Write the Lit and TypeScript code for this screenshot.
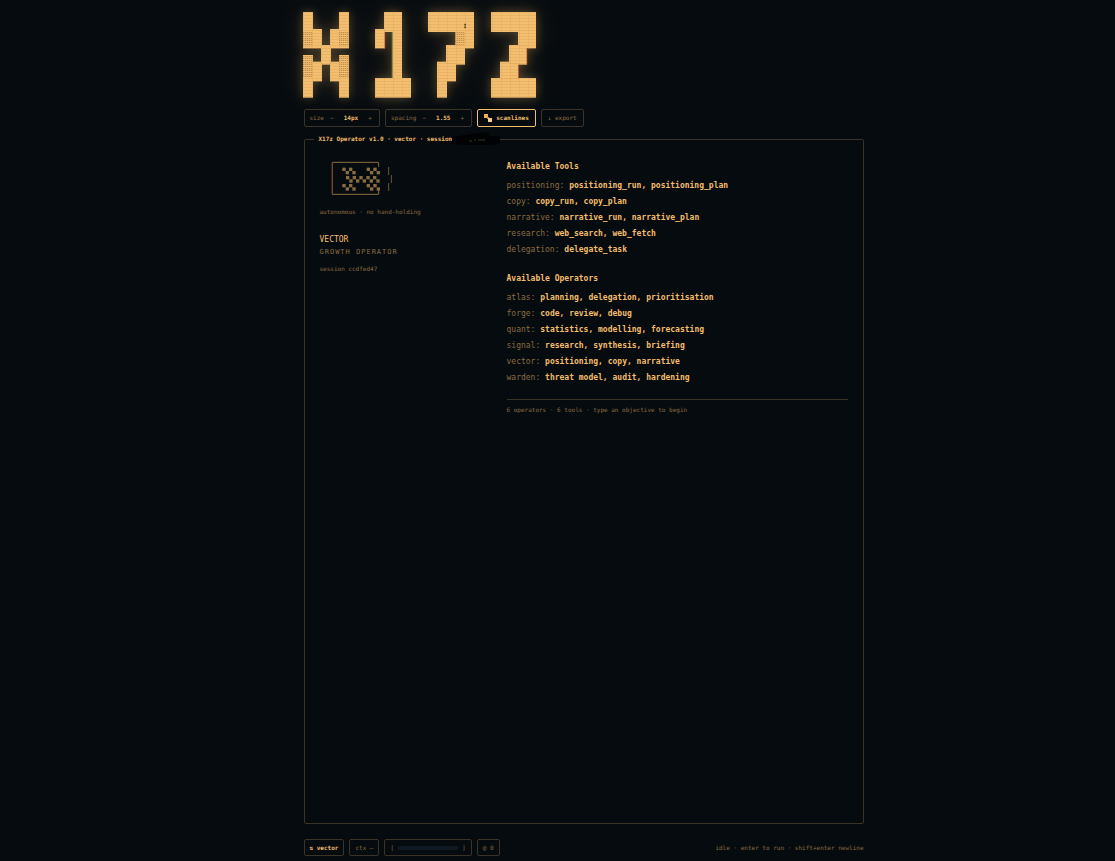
import { LitElement, html, css, svg } from "lit";
import { customElement, state } from "lit/decorators.js";

type Row = [string, string];
type Rect = [number, number, number, number];

const TOOLS: Row[] = [
  ["positioning", "positioning_run, positioning_plan"],
  ["copy", "copy_run, copy_plan"],
  ["narrative", "narrative_run, narrative_plan"],
  ["research", "web_search, web_fetch"],
  ["delegation", "delegate_task"],
];

const OPERATORS: Row[] = [
  ["atlas", "planning, delegation, prioritisation"],
  ["forge", "code, review, debug"],
  ["quant", "statistics, modelling, forecasting"],
  ["signal", "research, synthesis, briefing"],
  ["vector", "positioning, copy, narrative"],
  ["warden", "threat model, audit, hardening"],
];

// Block artwork, x1 y1 x2 y2 on a 702 x 258 canvas
const BLOCKS: Rect[] = [
  [0, 0, 30, 109], [108, 0, 138, 109], [30, 51, 57, 109], [81, 51, 108, 109], [54, 99, 84, 158],
  [0, 129, 30, 257], [108, 129, 138, 257], [30, 149, 57, 208], [81, 149, 108, 208],
  [243, 0, 297, 60], [216, 51, 246, 109], [268, 59, 297, 199], [216, 198, 324, 257],
  [375, 0, 513, 60], [457, 59, 513, 109], [429, 99, 486, 158], [402, 149, 459, 208], [402, 198, 432, 257],
  [564, 0, 699, 60], [645, 59, 699, 109], [618, 99, 672, 158], [591, 149, 647, 208], [564, 198, 699, 257],
];
const SHADES: Rect[] = [
  [0, 60, 30, 103], [108, 60, 138, 103], [0, 132, 30, 196], [108, 132, 138, 196], [459, 60, 486, 98],
];

@customElement("x-wordmark")
export class Wordmark extends LitElement {
  static styles = css`
    :host { display: block; }
    svg { display: block; width: 234px; height: 86px; overflow: visible;
      filter: drop-shadow(0 0 5px rgba(244, 185, 104, 0.28)) drop-shadow(0 0 12px rgba(244, 185, 104, 0.16)); }
    .block { fill: #f3be70; }
    .line { fill: #d99f52; }
    .grain { fill: #c08f4c; }
  `;
  render() {
    return html`<svg viewBox="3 0 702 258" role="img" aria-label="X17Z">
      <defs>
        <pattern id="lines" width="27" height="9" patternUnits="userSpaceOnUse">
          <rect class="line" width="27" height="3" opacity="0.35"></rect>
          <rect class="line" width="2" height="9" opacity="0.4"></rect>
        </pattern>
        <pattern id="grain" width="6" height="6" patternUnits="userSpaceOnUse">
          <rect class="grain" width="4" height="3"></rect>
        </pattern>
      </defs>
      ${BLOCKS.map(([a, b, c, d]) => svg`<rect class="block" x=${a} y=${b} width=${c - a} height=${d - b}></rect>`)}
      ${BLOCKS.map(([a, b, c, d]) => svg`<rect fill="url(#lines)" x=${a} y=${b} width=${c - a} height=${d - b}></rect>`)}
      ${SHADES.map(([a, b, c, d]) => svg`<rect fill="url(#grain)" x=${a} y=${b} width=${c - a} height=${d - b}></rect>`)}
      <path d="M246 60V109M672 108V158M647 158V199" stroke="#a8321c" stroke-width="2"></path>
      <path d="M267 60V198" stroke="#5f7a3a" stroke-width="2"></path>
      <path d="M484 37h5M484 42h5M484 47h5" stroke="#3a2a14" stroke-width="3"></path>
    </svg>`;
  }
}

@customElement("x-sigil")
export class Sigil extends LitElement {
  static styles = css`
    :host { display: block; color: #8a6c42; }
    svg { display: block; width: 62px; height: 34px; }
  `;
  private cells() {
    // each pair is a diagonal two-by-two tile
    const tiles = [
      ...[34, 54, 107, 127].flatMap((x) => [[x, 20], [x, 69]]),
      ...[45, 65, 85, 106, 126].map((x) => [x, 45]),
    ];
    return tiles.flatMap(([x, y]) => [[x, y], [x + 10, y + 10]]);
  }
  render() {
    return html`<svg viewBox="0 0 186 102" aria-hidden="true">
      <path d="M143 18V4H4V100H143V88" fill="none" stroke="currentColor" stroke-width="3"></path>
      <path d="M4 5V99" stroke="#7d4428" stroke-width="3"></path>
      <path d="M173 18V42M181 42V66M173 66V90" stroke="#6b5638" stroke-width="3"></path>
      ${this.cells().map(([x, y]) => svg`<rect x=${x} y=${y} width="10" height="10" fill="currentColor"></rect>`)}
    </svg>`;
  }
}

@customElement("app-root")
export class AppRoot extends LitElement {
  @state() private size = 14;
  @state() private spacing = 1.55;
  @state() private scanlines = true;

  static styles = css`
    :host {
      --amber: #f4bd6c;
      --dim: #8a6c42;
      --edge: #3b3328;
      --bg: #060b0f;
      display: block;
      min-height: 100vh;
      background: var(--bg);
      color: var(--amber);
      font: 6px/10px "DejaVu Sans Mono", "Liberation Mono", monospace;
    }
    * { box-sizing: border-box; }
    .page {
      display: flex; flex-direction: column;
      min-height: 100vh;
      max-width: 560px;
      margin-left: calc(50vw - 254px);
      padding: 12px 0 5px;
    }
    button { font: inherit; color: inherit; background: none; border: 0; padding: 0; cursor: pointer; }
    .toolbar { display: flex; gap: 5px; margin-top: 11px; }
    .chip {
      display: flex; align-items: center; justify-content: center; gap: 4px;
      height: 18px; padding: 0 5px;
      border: 1px solid var(--edge); border-radius: 2px;
      color: var(--dim); white-space: nowrap;
    }
    .toolbar button.chip { padding: 0 6px; }
    .step { width: 8px; text-align: center; }
    .value { color: var(--amber); font-weight: bold; min-width: 22px; text-align: center; }
    .chip.on { border-color: var(--amber); color: var(--amber); font-weight: bold; }
    .icon { width: 8px; height: 8px; }
    .panel {
      flex: 1; display: grid; grid-template-columns: 171px 1fr; gap: 16px;
      align-content: start;
      min-width: 0; margin: 7px 0 0; padding: 12px 15px;
      border: 1px solid var(--edge); border-radius: 2px;
    }
    legend { margin-left: -6px; padding: 0 0 0 5px; font-weight: bold; display: flex; }
    .redacted { width: 48px; height: 14px; margin: -2px 0; }
    .sigil { margin: 5px 0 0 11px; }
    .dim { color: var(--dim); margin: 0; }
    .motto { margin-top: 12px; }
    .name { margin: 17px 0 0; font-size: 8px; font-weight: normal; line-height: 12px; }
    .role { font-size: 7px; letter-spacing: 1px; margin-top: 1px; }
    .session { margin-top: 7px; }
    .lists { padding-top: 3px; }
    h2 { margin: 0; font-size: 8px; line-height: 16px; }
    dl { margin: 3px 0 13px; font-size: 8px; line-height: 16px; }
    dt, dd { display: inline; margin: 0; }
    dt { color: var(--dim); }
    dd { font-weight: bold; }
    .summary { border-top: 1px solid var(--edge); padding-top: 5px; }
    .status { display: flex; align-items: center; gap: 5px; margin-top: 15px; }
    .status .chip { height: 17px; }
    .status .agent { color: var(--amber); font-weight: bold; }
    .track { width: 60px; height: 4px; background: #101821; }
    .hint { margin-left: auto; color: var(--dim); }
  `;

  private list(rows: Row[]) {
    return html`<dl>${rows.map(([k, v]) => html`<div><dt>${k}:</dt> <dd>${v}</dd></div>`)}</dl>`;
  }

  render() {
    return html`<main class="page">
      <x-wordmark></x-wordmark>
      <div class="toolbar">
        <div class="chip">size
          <button class="step" aria-label="Smaller" @click=${() => this.size--}>−</button>
          <span class="value">${this.size}px</span>
          <button class="step" aria-label="Larger" @click=${() => this.size++}>+</button>
        </div>
        <div class="chip">spacing
          <button class="step" aria-label="Tighter" @click=${() => (this.spacing -= 0.05)}>−</button>
          <span class="value">${this.spacing.toFixed(2)}</span>
          <button class="step" aria-label="Looser" @click=${() => (this.spacing += 0.05)}>+</button>
        </div>
        <button class="chip ${this.scanlines ? "on" : ""}" aria-pressed=${this.scanlines}
          @click=${() => (this.scanlines = !this.scanlines)}>
          <svg class="icon" viewBox="0 0 8 8" aria-hidden="true">
            <path d="M0 0h4v4H0z" fill="#f0b05c"></path>
            <path d="M3 3h2v2H3z" fill="#c98a48"></path>
            <path d="M4 4h4v4H4z" fill="#f8cf92"></path>
          </svg>scanlines</button>
        <button class="chip">↓ export</button>
      </div>
      <fieldset class="panel">
        <legend>X17z Operator v1.0 · vector · session<svg class="redacted" viewBox="0 0 48 14" aria-hidden="true">
          <path d="M0 5 L14 3 L33 0 L38 2 L36 4 L48 5 V11 L40 13 L18 13 L0 12Z" fill="#010203"></path>
          <path d="M17 9h3M22 8h2M26 8h7" stroke="#3d3425" stroke-width="1"></path>
        </svg></legend>
        <section>
          <x-sigil class="sigil"></x-sigil>
          <p class="dim motto">autonomous · no hand-holding</p>
          <h1 class="name">VECTOR</h1>
          <p class="dim role">GROWTH OPERATOR</p>
          <p class="dim session">session ccdfed47</p>
        </section>
        <section class="lists">
          <h2>Available Tools</h2>
          ${this.list(TOOLS)}
          <h2>Available Operators</h2>
          ${this.list(OPERATORS)}
          <p class="dim summary">6 operators · 6 tools · type an objective to begin</p>
        </section>
      </fieldset>
      <footer class="status">
        <button class="chip agent">⇅ vector</button>
        <span class="chip">ctx —</span>
        <span class="chip">[<span class="track"></span>]</span>
        <span class="chip">@ 0</span>
        <span class="hint">idle · enter to run · shift+enter newline</span>
      </footer>
    </main>`;
  }
}
